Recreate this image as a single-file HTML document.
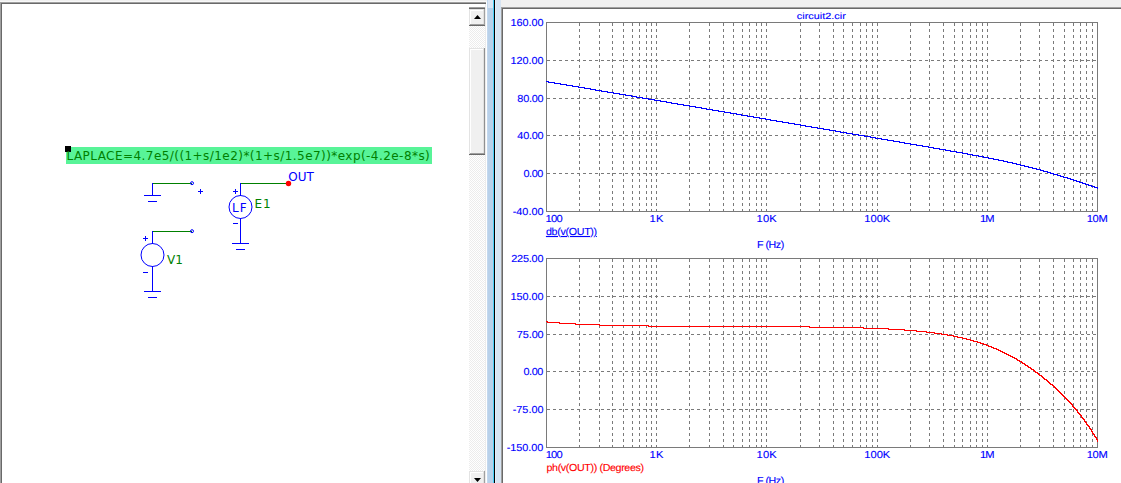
<!DOCTYPE html><html><head><meta charset="utf-8"><title>circuit2.cir</title>
<style>html,body{margin:0;padding:0;background:#fff;overflow:hidden}svg{display:block}.a{font-family:"Liberation Sans",Arial,sans-serif;font-size:9.8px;fill:#0000ff;text-rendering:geometricPrecision}.v{font-family:"DejaVu Sans",Verdana,sans-serif;font-size:12px}</style></head><body>
<svg width="1121" height="483" viewBox="0 0 1121 483">
<defs><pattern id="dz" width="2" height="2" patternUnits="userSpaceOnUse"><rect width="2" height="2" fill="#ffffff"/><rect width="1" height="1" fill="#ececec"/><rect x="1" y="1" width="1" height="1" fill="#ececec"/></pattern></defs>
<rect width="1121" height="483" fill="#ffffff"/>
<rect x="0" y="0" width="487" height="2" fill="#f0f0f0"/>
<rect x="485" y="0" width="1" height="483" fill="#ececec"/>
<rect x="0" y="1" width="487" height="1" fill="#f8f8f8"/>
<rect x="0" y="2" width="486" height="1" fill="#a0a0a0"/>
<rect x="0" y="2" width="1" height="481" fill="#a0a0a0"/>
<rect x="1" y="3" width="485" height="1" fill="#696969"/>
<rect x="1" y="3" width="1" height="480" fill="#696969"/>
<rect x="469" y="7" width="16" height="476" fill="url(#dz)"/>
<rect x="469" y="7" width="16" height="1" fill="#a0a0a0"/>
<rect x="469" y="8" width="16" height="1" fill="#696969"/>
<rect x="469" y="9" width="16" height="17" fill="#f0f0f0"/>
<rect x="469" y="9" width="15" height="1" fill="#e3e3e3"/>
<rect x="469" y="9" width="1" height="16" fill="#e3e3e3"/>
<rect x="470" y="10" width="13" height="1" fill="#ffffff"/>
<rect x="470" y="10" width="1" height="14" fill="#ffffff"/>
<rect x="483" y="10" width="1" height="15" fill="#e0e0e0"/>
<rect x="470" y="24" width="14" height="1" fill="#a0a0a0"/>
<rect x="484" y="9" width="1" height="17" fill="#a0a0a0"/>
<rect x="469" y="25" width="16" height="1" fill="#696969"/>
<rect x="469" y="48" width="16" height="107" fill="#f0f0f0"/>
<rect x="469" y="48" width="15" height="1" fill="#e3e3e3"/>
<rect x="469" y="48" width="1" height="106" fill="#e3e3e3"/>
<rect x="470" y="49" width="13" height="1" fill="#ffffff"/>
<rect x="470" y="49" width="1" height="104" fill="#ffffff"/>
<rect x="483" y="49" width="1" height="105" fill="#e0e0e0"/>
<rect x="470" y="153" width="14" height="1" fill="#a0a0a0"/>
<rect x="484" y="48" width="1" height="107" fill="#909090"/>
<rect x="469" y="154" width="16" height="1" fill="#696969"/>
<rect x="469" y="471" width="16" height="17" fill="#f0f0f0"/>
<rect x="469" y="471" width="15" height="1" fill="#e3e3e3"/>
<rect x="469" y="471" width="1" height="16" fill="#e3e3e3"/>
<rect x="470" y="472" width="13" height="1" fill="#ffffff"/>
<rect x="470" y="472" width="1" height="14" fill="#ffffff"/>
<rect x="483" y="472" width="1" height="15" fill="#e0e0e0"/>
<rect x="470" y="486" width="14" height="1" fill="#a0a0a0"/>
<rect x="484" y="471" width="1" height="17" fill="#a0a0a0"/>
<rect x="469" y="487" width="16" height="1" fill="#696969"/>
<path d="M474 19 L481 19 L477.5 15 Z" fill="#000"/>
<path d="M474 478 L481 478 L477.5 482 Z" fill="#000"/>
<rect x="487" y="0" width="6" height="483" fill="#b9d1ea"/>
<rect x="487" y="0" width="6" height="8" fill="#dbe6f4"/>
<rect x="493" y="0" width="1" height="483" fill="#48d0f8"/>
<rect x="494" y="0" width="1" height="483" fill="#000000"/>
<rect x="495" y="0" width="6" height="483" fill="#d7e4f2"/>
<rect x="495" y="0" width="1" height="483" fill="#e4eefa"/>
<rect x="487" y="0" width="1" height="483" fill="#c3d8ee"/>
<rect x="501" y="0" width="620" height="8" fill="#f0f0f0"/>
<rect x="501" y="7" width="620" height="1" fill="#a0a0a0"/>
<rect x="501" y="7" width="1" height="476" fill="#a0a0a0"/>
<rect x="502" y="8" width="619" height="1" fill="#696969"/>
<rect x="502" y="8" width="1" height="475" fill="#696969"/>
<rect x="66" y="147" width="366" height="17" fill="#58f498"/>
<rect x="65" y="146" width="6" height="6" fill="#000"/>
<text class="v" x="66.5" y="160" fill="#008000" textLength="363.3" lengthAdjust="spacing">LAPLACE=4.7e5/((1+s/1e2)*(1+s/1.5e7))*exp(-4.2e-8*s)</text>
<rect x="152" y="183" width="40" height="1" fill="#008000"/>
<rect x="152" y="183" width="1" height="13" fill="#0000ff"/>
<rect x="144" y="195" width="17" height="1" fill="#0000ff"/>
<rect x="148" y="201" width="9" height="1" fill="#0000ff"/>
<circle cx="192" cy="183.2" r="1.5" fill="none" stroke="#0000ff" stroke-width="1"/>
<rect x="198" y="191" width="5" height="1" fill="#0000ff"/>
<rect x="200" y="189" width="1" height="5" fill="#0000ff"/>
<rect x="152" y="231" width="40" height="1" fill="#008000"/>
<rect x="152" y="231" width="1" height="13" fill="#0000ff"/>
<circle cx="192" cy="231.2" r="1.5" fill="none" stroke="#0000ff" stroke-width="1"/>
<circle cx="152.5" cy="255" r="11.5" fill="none" stroke="#0000ff" stroke-width="1"/>
<rect x="152" y="266" width="1" height="26" fill="#0000ff"/>
<rect x="144" y="291" width="17" height="1" fill="#0000ff"/>
<rect x="148" y="297" width="9" height="1" fill="#0000ff"/>
<rect x="143" y="238" width="5" height="1" fill="#0000ff"/>
<rect x="145" y="236" width="1" height="5" fill="#0000ff"/>
<rect x="143" y="272" width="5" height="1" fill="#0000ff"/>
<text class="v" x="167" y="264" fill="#008000">V1</text>
<rect x="240" y="183" width="47" height="1" fill="#008000"/>
<rect x="240" y="183" width="1" height="13" fill="#0000ff"/>
<circle cx="240.5" cy="207" r="11.5" fill="none" stroke="#0000ff" stroke-width="1"/>
<rect x="240" y="218" width="1" height="26" fill="#0000ff"/>
<rect x="232" y="243" width="17" height="1" fill="#0000ff"/>
<rect x="236" y="249" width="9" height="1" fill="#0000ff"/>
<rect x="233" y="191" width="5" height="1" fill="#0000ff"/>
<rect x="235" y="189" width="1" height="5" fill="#0000ff"/>
<rect x="233" y="223" width="5" height="1" fill="#0000ff"/>
<circle cx="288.5" cy="183.5" r="2.7" fill="#ff0000"/>
<text class="v" x="288.3" y="181" fill="#0000ff">OUT</text>
<text class="v" x="254.5" y="208" fill="#008000" style="letter-spacing:1px">E1</text>
<text class="v" x="232" y="211.5" fill="#0000ff" style="letter-spacing:1px">LF</text>
<path d="M579.5 23.0V211.5 M599.5 23.0V211.5 M612.5 23.0V211.5 M623.5 23.0V211.5 M632.5 23.0V211.5 M639.5 23.0V211.5 M646.5 23.0V211.5 M651.5 23.0V211.5 M656.5 23.0V211.5 M689.5 23.0V211.5 M709.5 23.0V211.5 M723.5 23.0V211.5 M733.5 23.0V211.5 M742.5 23.0V211.5 M749.5 23.0V211.5 M756.5 23.0V211.5 M761.5 23.0V211.5 M766.5 23.0V211.5 M800.5 23.0V211.5 M819.5 23.0V211.5 M833.5 23.0V211.5 M843.5 23.0V211.5 M852.5 23.0V211.5 M860.5 23.0V211.5 M866.5 23.0V211.5 M872.5 23.0V211.5 M877.5 23.0V211.5 M910.5 23.0V211.5 M929.5 23.0V211.5 M943.5 23.0V211.5 M954.5 23.0V211.5 M962.5 23.0V211.5 M970.5 23.0V211.5 M976.5 23.0V211.5 M982.5 23.0V211.5 M987.5 23.0V211.5 M1020.5 23.0V211.5 M1039.5 23.0V211.5 M1053.5 23.0V211.5 M1064.5 23.0V211.5 M1073.5 23.0V211.5 M1080.5 23.0V211.5 M1086.5 23.0V211.5 M1092.5 23.0V211.5" stroke="#7a7a7a" stroke-width="1" stroke-dasharray="3 3" fill="none"/>
<path d="M547.0 60.5H1097.5 M547.0 98.5H1097.5 M547.0 135.5H1097.5 M547.0 173.5H1097.5" stroke="#7a7a7a" stroke-width="1" stroke-dasharray="3 3" fill="none"/>
<rect x="546.5" y="22.5" width="551.0" height="189.0" fill="none" stroke="#7a7a7a" stroke-width="1"/>
<text class="a" transform="translate(510.55 26.00) scale(1.07 1)" style="fill:#0000ff;stroke:#0000ff;stroke-width:0.12px;letter-spacing:-0.049px;font-size:10.17px">160.00</text>
<text class="a" transform="translate(510.55 64.00) scale(1.07 1)" style="fill:#0000ff;stroke:#0000ff;stroke-width:0.12px;letter-spacing:-0.049px;font-size:10.17px">120.00</text>
<text class="a" transform="translate(517.32 102.00) scale(1.07 1)" style="fill:#0000ff;stroke:#0000ff;stroke-width:0.12px;letter-spacing:-0.203px;font-size:10.17px">80.00</text>
<text class="a" transform="translate(517.37 139.00) scale(1.07 1)" style="fill:#0000ff;stroke:#0000ff;stroke-width:0.12px;letter-spacing:-0.216px;font-size:10.17px">40.00</text>
<text class="a" transform="translate(523.42 177.00) scale(1.07 1)" style="fill:#0000ff;stroke:#0000ff;stroke-width:0.12px;letter-spacing:-0.363px;font-size:10.17px">0.00</text>
<text class="a" transform="translate(512.70 215.00) scale(1.07 1)" style="fill:#0000ff;stroke:#0000ff;stroke-width:0.12px;letter-spacing:-0.002px;font-size:10.17px">-40.00</text>
<text class="a" transform="translate(545.47 222.00) scale(1.1 1)" style="fill:#0000ff;stroke:#0000ff;stroke-width:0.12px;letter-spacing:-0.686px;font-size:10.17px">100</text>
<text class="a" transform="translate(649.42 222.00) scale(1.1 1)" style="fill:#0000ff;stroke:#0000ff;stroke-width:0.12px;letter-spacing:0.318px;font-size:10.17px">1K</text>
<text class="a" transform="translate(756.60 222.00) scale(1.1 1)" style="fill:#0000ff;stroke:#0000ff;stroke-width:0.12px;letter-spacing:0.088px;font-size:10.17px">10K</text>
<text class="a" transform="translate(864.37 222.00) scale(1.1 1)" style="fill:#0000ff;stroke:#0000ff;stroke-width:0.12px;letter-spacing:-0.071px;font-size:10.17px">100K</text>
<text class="a" transform="translate(980.05 222.00) scale(1.1 1)" style="fill:#0000ff;stroke:#0000ff;stroke-width:0.12px;letter-spacing:-0.960px;font-size:10.17px">1M</text>
<text class="a" transform="translate(1086.69 222.00) scale(1.1 1)" style="fill:#0000ff;stroke:#0000ff;stroke-width:0.12px;letter-spacing:-0.286px;font-size:10.17px">10M</text>
<text class="a" transform="translate(545.99 235.00) scale(1.05 1)" style="fill:#0000ff;stroke:#0000ff;stroke-width:0.12px;letter-spacing:-0.289px;font-size:10.17px" text-decoration="underline">db(v(OUT))</text>
<text class="a" transform="translate(757.00 248.00) scale(1.05 1)" style="fill:#0000ff;stroke:#0000ff;stroke-width:0.12px;letter-spacing:-0.462px;font-size:10.17px">F (Hz)</text>
<path d="M546 81h3v1h-3zM548 82h7v1h-7zM554 83h7v1h-7zM560 84h7v1h-7zM566 85h7v1h-7zM572 86h7v1h-7zM578 87h7v1h-7zM584 88h7v1h-7zM590 89h6v1h-6zM595 90h7v1h-7zM601 91h7v1h-7zM607 92h7v1h-7zM613 93h7v1h-7zM619 94h7v1h-7zM625 95h7v1h-7zM631 96h6v1h-6zM636 97h7v1h-7zM642 98h7v1h-7zM648 99h7v1h-7zM654 100h7v1h-7zM660 101h7v1h-7zM666 102h6v1h-6zM671 103h7v1h-7zM677 104h7v1h-7zM683 105h7v1h-7zM689 106h7v1h-7zM695 107h7v1h-7zM701 108h6v1h-6zM706 109h7v1h-7zM712 110h7v1h-7zM718 111h7v1h-7zM724 112h7v1h-7zM730 113h7v1h-7zM736 114h6v1h-6zM741 115h7v1h-7zM747 116h7v1h-7zM753 117h7v1h-7zM759 118h7v1h-7zM765 119h6v1h-6zM770 120h7v1h-7zM776 121h7v1h-7zM782 122h7v1h-7zM788 123h7v1h-7zM794 124h7v1h-7zM800 125h6v1h-6zM805 126h7v1h-7zM811 127h7v1h-7zM817 128h7v1h-7zM823 129h7v1h-7zM829 130h7v1h-7zM835 131h6v1h-6zM840 132h7v1h-7zM846 133h7v1h-7zM852 134h7v1h-7zM858 135h7v1h-7zM864 136h7v1h-7zM870 137h6v1h-6zM875 138h7v1h-7zM881 139h7v1h-7zM887 140h7v1h-7zM893 141h7v1h-7zM899 142h6v1h-6zM904 143h7v1h-7zM910 144h7v1h-7zM916 145h7v1h-7zM922 146h7v1h-7zM928 147h6v1h-6zM933 148h7v1h-7zM939 149h7v1h-7zM945 150h6v1h-6zM950 151h7v1h-7zM956 152h7v1h-7zM962 153h6v1h-6zM967 154h6v1h-6zM972 155h7v1h-7zM978 156h6v1h-6zM983 157h6v1h-6zM988 158h6v1h-6zM993 159h6v1h-6zM998 160h6v1h-6zM1003 161h5v1h-5zM1007 162h6v1h-6zM1012 163h5v1h-5zM1016 164h5v1h-5zM1020 165h5v1h-5zM1024 166h5v1h-5zM1028 167h5v1h-5zM1032 168h5v1h-5zM1036 169h5v1h-5zM1040 170h4v1h-4zM1043 171h5v1h-5zM1047 172h4v1h-4zM1050 173h4v1h-4zM1053 174h5v1h-5zM1057 175h4v1h-4zM1060 176h4v1h-4zM1063 177h5v1h-5zM1067 178h4v1h-4zM1070 179h4v1h-4zM1073 180h4v1h-4zM1076 181h4v1h-4zM1079 182h4v1h-4zM1082 183h4v1h-4zM1085 184h4v1h-4zM1088 185h4v1h-4zM1091 186h4v1h-4zM1094 187h4v1h-4zM1097 188h1v1h-1z" fill="#0000ff"/>
<path d="M579.5 259.0V447.5 M599.5 259.0V447.5 M612.5 259.0V447.5 M623.5 259.0V447.5 M632.5 259.0V447.5 M639.5 259.0V447.5 M646.5 259.0V447.5 M651.5 259.0V447.5 M656.5 259.0V447.5 M689.5 259.0V447.5 M709.5 259.0V447.5 M723.5 259.0V447.5 M733.5 259.0V447.5 M742.5 259.0V447.5 M749.5 259.0V447.5 M756.5 259.0V447.5 M761.5 259.0V447.5 M766.5 259.0V447.5 M800.5 259.0V447.5 M819.5 259.0V447.5 M833.5 259.0V447.5 M843.5 259.0V447.5 M852.5 259.0V447.5 M860.5 259.0V447.5 M866.5 259.0V447.5 M872.5 259.0V447.5 M877.5 259.0V447.5 M910.5 259.0V447.5 M929.5 259.0V447.5 M943.5 259.0V447.5 M954.5 259.0V447.5 M962.5 259.0V447.5 M970.5 259.0V447.5 M976.5 259.0V447.5 M982.5 259.0V447.5 M987.5 259.0V447.5 M1020.5 259.0V447.5 M1039.5 259.0V447.5 M1053.5 259.0V447.5 M1064.5 259.0V447.5 M1073.5 259.0V447.5 M1080.5 259.0V447.5 M1086.5 259.0V447.5 M1092.5 259.0V447.5" stroke="#7a7a7a" stroke-width="1" stroke-dasharray="3 3" fill="none"/>
<path d="M547.0 296.5H1097.5 M547.0 334.5H1097.5 M547.0 371.5H1097.5 M547.0 409.5H1097.5" stroke="#7a7a7a" stroke-width="1" stroke-dasharray="3 3" fill="none"/>
<rect x="546.5" y="258.5" width="551.0" height="189.0" fill="none" stroke="#7a7a7a" stroke-width="1"/>
<text class="a" transform="translate(511.18 262.00) scale(1.07 1)" style="fill:#0000ff;stroke:#0000ff;stroke-width:0.12px;letter-spacing:-0.167px;font-size:10.17px">225.00</text>
<text class="a" transform="translate(510.55 300.00) scale(1.07 1)" style="fill:#0000ff;stroke:#0000ff;stroke-width:0.12px;letter-spacing:-0.049px;font-size:10.17px">150.00</text>
<text class="a" transform="translate(516.84 338.00) scale(1.07 1)" style="fill:#0000ff;stroke:#0000ff;stroke-width:0.12px;letter-spacing:-0.090px;font-size:10.17px">75.00</text>
<text class="a" transform="translate(523.42 375.00) scale(1.07 1)" style="fill:#0000ff;stroke:#0000ff;stroke-width:0.12px;letter-spacing:-0.363px;font-size:10.17px">0.00</text>
<text class="a" transform="translate(512.70 413.00) scale(1.07 1)" style="fill:#0000ff;stroke:#0000ff;stroke-width:0.12px;letter-spacing:-0.002px;font-size:10.17px">-75.00</text>
<text class="a" transform="translate(506.70 451.00) scale(1.07 1)" style="fill:#0000ff;stroke:#0000ff;stroke-width:0.12px;letter-spacing:-0.032px;font-size:10.17px">-150.00</text>
<text class="a" transform="translate(545.66 458.00) scale(1.1 1)" style="fill:#0000ff;stroke:#0000ff;stroke-width:0.12px;letter-spacing:-0.774px;font-size:10.17px">100</text>
<text class="a" transform="translate(649.42 458.00) scale(1.1 1)" style="fill:#0000ff;stroke:#0000ff;stroke-width:0.12px;letter-spacing:0.318px;font-size:10.17px">1K</text>
<text class="a" transform="translate(756.60 458.00) scale(1.1 1)" style="fill:#0000ff;stroke:#0000ff;stroke-width:0.12px;letter-spacing:0.088px;font-size:10.17px">10K</text>
<text class="a" transform="translate(864.37 458.00) scale(1.1 1)" style="fill:#0000ff;stroke:#0000ff;stroke-width:0.12px;letter-spacing:-0.071px;font-size:10.17px">100K</text>
<text class="a" transform="translate(980.05 458.00) scale(1.1 1)" style="fill:#0000ff;stroke:#0000ff;stroke-width:0.12px;letter-spacing:-0.960px;font-size:10.17px">1M</text>
<text class="a" transform="translate(1086.69 458.00) scale(1.1 1)" style="fill:#0000ff;stroke:#0000ff;stroke-width:0.12px;letter-spacing:-0.286px;font-size:10.17px">10M</text>
<text class="a" transform="translate(546.50 471.00) scale(1.05 1)" style="fill:#ff0000;stroke:#ff0000;stroke-width:0.12px;letter-spacing:-0.338px;font-size:10.17px">ph(v(OUT)) (Degrees)</text>
<text class="a" transform="translate(757.00 484.00) scale(1.05 1)" style="fill:#0000ff;stroke:#0000ff;stroke-width:0.12px;letter-spacing:-0.462px;font-size:10.17px">F (Hz)</text>
<path d="M546 321h2v1h-2zM547 322h13v1h-13zM559 323h17v1h-17zM575 324h25v1h-25zM599 325h50v1h-50zM648 326h162v1h-162zM809 327h55v1h-55zM863 328h26v1h-26zM888 329h17v1h-17zM904 330h13v1h-13zM916 331h11v1h-11zM926 332h9v1h-9zM934 333h8v1h-8zM941 334h7v1h-7zM947 335h7v1h-7zM953 336h5v1h-5zM957 337h6v1h-6zM962 338h5v1h-5zM966 339h5v1h-5zM970 340h4v1h-4zM973 341h5v1h-5zM977 342h4v1h-4zM980 343h4v1h-4zM983 344h4v1h-4zM986 345h3v1h-3zM988 346h4v1h-4zM991 347h3v1h-3zM993 348h4v1h-4zM996 349h3v1h-3zM998 350h3v1h-3zM1000 351h3v1h-3zM1002 352h3v1h-3zM1004 353h3v1h-3zM1006 354h3v1h-3zM1008 355h3v1h-3zM1010 356h3v1h-3zM1012 357h3v1h-3zM1014 358h3v1h-3zM1016 359h2v1h-2zM1017 360h3v1h-3zM1019 361h3v1h-3zM1021 362h2v1h-2zM1022 363h3v1h-3zM1024 364h2v1h-2zM1025 365h3v1h-3zM1027 366h2v1h-2zM1028 367h3v1h-3zM1030 368h2v1h-2zM1031 369h3v1h-3zM1033 370h2v1h-2zM1034 371h2v1h-2zM1035 372h3v1h-3zM1037 373h2v1h-2zM1038 374h2v1h-2zM1039 375h3v1h-3zM1041 376h2v1h-2zM1042 377h2v1h-2zM1043 378h2v1h-2zM1044 379h3v1h-3zM1046 380h2v1h-2zM1047 381h2v1h-2zM1048 382h2v1h-2zM1049 383h2v1h-2zM1050 384h3v1h-3zM1052 385h2v1h-2zM1053 386h2v1h-2zM1054 387h2v1h-2zM1055 388h2v1h-2zM1056 389h2v1h-2zM1057 390h2v1h-2zM1058 391h2v1h-2zM1059 392h2v1h-2zM1060 393h2v1h-2zM1061 394h2v1h-2zM1062 395h2v1h-2zM1063 396h2v1h-2zM1064 397h2v1h-2zM1065 398h2v1h-2zM1066 399h2v1h-2zM1067 400h2v1h-2zM1068 401h2v1h-2zM1069 402h2v1h-2zM1070 403h2v1h-2zM1071 404h2v1h-2zM1072 405h1v1h-1zM1072 406h2v1h-2zM1073 407h2v1h-2zM1074 408h2v1h-2zM1075 409h2v1h-2zM1076 410h2v1h-2zM1077 411h1v1h-1zM1077 412h2v1h-2zM1078 413h2v1h-2zM1079 414h2v1h-2zM1080 415h2v1h-2zM1081 416h1v1h-1zM1081 417h2v1h-2zM1082 418h2v1h-2zM1083 419h2v1h-2zM1084 420h1v1h-1zM1084 421h2v1h-2zM1085 422h2v1h-2zM1086 423h1v1h-1zM1086 424h2v1h-2zM1087 425h2v1h-2zM1088 426h2v1h-2zM1089 427h1v1h-1zM1089 428h2v1h-2zM1090 429h2v1h-2zM1091 430h1v1h-1zM1091 431h2v1h-2zM1092 432h1v1h-1zM1092 433h2v1h-2zM1093 434h2v1h-2zM1094 435h1v1h-1zM1094 436h2v1h-2zM1095 437h2v1h-2zM1096 438h1v1h-1zM1096 439h2v1h-2zM1097 440h1v1h-1zM1097 441h1v1h-1z" fill="#ff0000"/>
<text class="a" transform="translate(796.79 19.00) scale(1.2 1)" style="fill:#0000ff;stroke:#0000ff;stroke-width:0.12px;letter-spacing:0.028px;font-size:9px">circuit2.cir</text>
</svg></body></html>
